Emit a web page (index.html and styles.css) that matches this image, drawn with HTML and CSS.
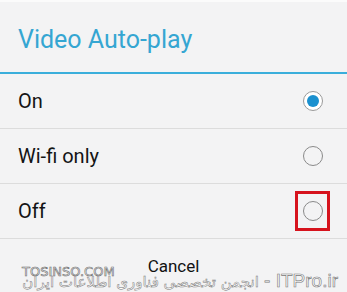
FILE: index.html
```html
<!DOCTYPE html>
<html>
<head>
<meta charset="utf-8">
<link rel="stylesheet" href="styles.css">
</head>
<body>
<div class="dialog">
  <div class="title">Video Auto-play</div>
  <div class="options">
    <div class="row">
      <span class="label">On</span>
      <span class="radio checked"><span class="dot"></span></span>
    </div>
    <div class="row">
      <span class="label">Wi-fi only</span>
      <span class="radio"></span>
    </div>
    <div class="row">
      <span class="label">Off</span>
      <span class="radio-wrap"><span class="radio"></span><span class="highlight"></span></span>
    </div>
  </div>
  <div class="actions">
    <span class="cancel">Cancel</span>
  </div>
  <div class="wm-site">TOSINSO.COM</div>
  <div class="wm-forum"><span class="wm-fa" dir="rtl">انجمن تخصصی فناوری اطلاعات ایران</span><span class="wm-latin"> - ITPro.ir</span></div>
</div>
</body>
</html>
```
FILE: styles.css
```css
* { box-sizing: border-box; }
html, body { margin: 0; padding: 0; }
body {
  width: 347px;
  height: 292px;
  overflow: hidden;
  background: #f3f3f4;
  font-family: Roboto, "Noto Sans", sans-serif;
}
.dialog {
  position: relative;
  height: 292px;
  display: flex;
  flex-direction: column;
  border-top: 2px solid #fbfbfb;
}
.title {
  height: 72px;
  flex: none;
  padding: 23px 0 0 18px;
  font-size: 25px;
  color: #35a6d2;
  border-bottom: 2px solid #3aaedb;
  line-height: 30px;
}
.options {
  display: flex;
  flex-direction: column;
}
.row {
  height: 55px;
  display: flex;
  align-items: center;
  justify-content: space-between;
  padding: 0 24px 0 18px;
  border-bottom: 1px solid #dcdcdc;
}
.label {
  font-size: 20px;
  color: #141414;
}
.radio {
  width: 20px;
  height: 20px;
  border-radius: 50%;
  border: 1px solid #8a8a8a;
  display: flex;
  align-items: center;
  justify-content: center;
}
.radio.checked {
  border-color: #9a9a9a;
  background: #fff;
}
.dot {
  width: 12px;
  height: 12px;
  border-radius: 50%;
  background: #1a90cf;
}
.radio-wrap {
  position: relative;
  display: flex;
}
.highlight {
  position: absolute;
  left: -8px;
  top: -10px;
  width: 35px;
  height: 40px;
  border: 3px solid #d6131d;
}
.actions {
  flex: 1;
  display: flex;
  justify-content: center;
  padding-top: 17px;
}
.cancel {
  font-size: 17px;
  color: #111;
  line-height: 20px;
}
.wm-site {
  position: absolute;
  left: 22px;
  top: 263px;
  font-family: "DejaVu Sans", sans-serif;
  font-size: 13px;
  line-height: 14px;
  color: #fff;
  -webkit-text-stroke: 0.6px #6a6a6a;
}
.wm-forum {
  position: absolute;
  right: 9px;
  top: 269px;
  white-space: nowrap;
  line-height: 20px;
  color: #fff;
  display: flex;
  align-items: baseline;
}
.wm-latin {
  white-space: pre;
  font-family: "Liberation Sans", sans-serif;
  font-size: 19px;
  -webkit-text-stroke: 0.6px #777;
}
.wm-fa {
  font-family: "DejaVu Sans", sans-serif;
  font-size: 15px;
  -webkit-text-stroke: 0.5px #777;
}
```
